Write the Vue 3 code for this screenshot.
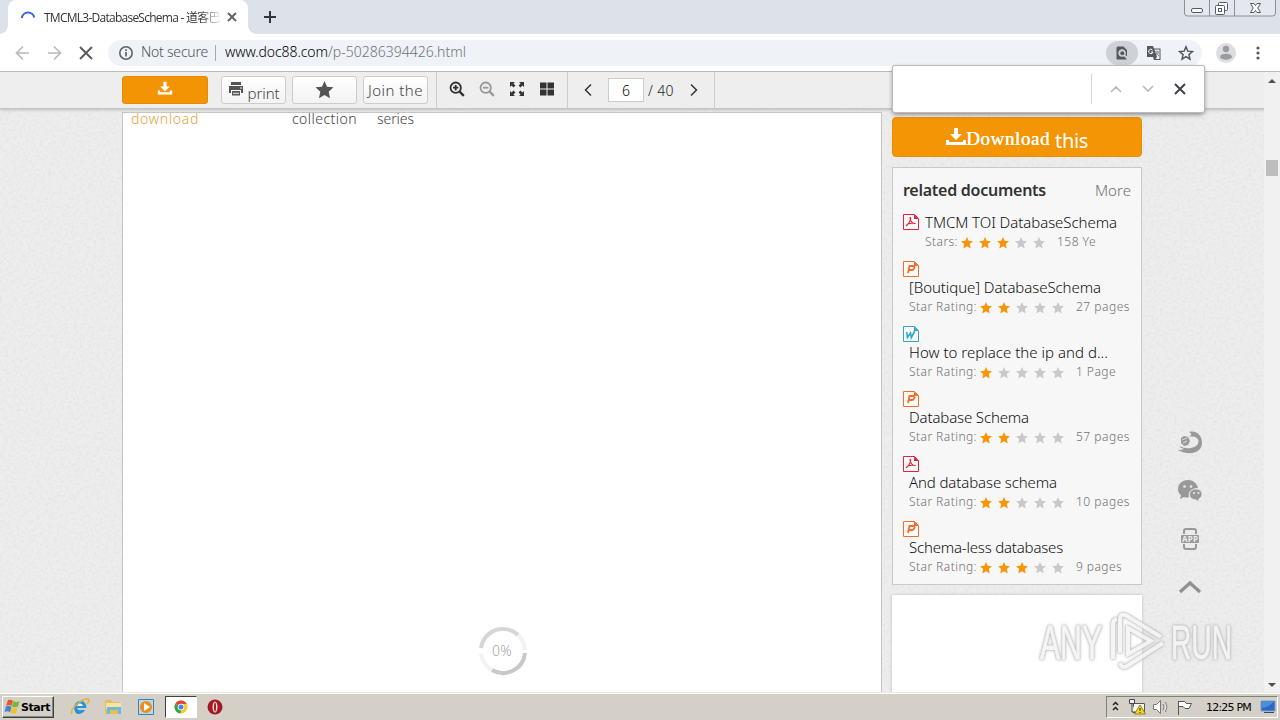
<script setup>
const vFit = {
  mounted(el, binding) {
    const width = el.getBoundingClientRect().width
    el.style.letterSpacing = (binding.value - width) / el.textContent.length + 'px'
  },
}
const starPath = 'M6 0 7.700 3.800l4.300.4-3.200 2.900.9 4.400L6 9.300l-3.700 2.200.9-4.400L0 4.200l4.300-.4z'
const docs = [
  { type: 'pdf', title: 'TMCM TOI DatabaseSchema', w: 192, label: 'Stars:', lw: 33, stars: 3, pages: '158 Ye', pw: 39, inline: true },
  { type: 'P', title: '[Boutique] DatabaseSchema', w: 192, label: 'Star Rating:', lw: 68, stars: 2, pages: '27 pages', pw: 54 },
  { type: 'W', title: 'How to replace the ip and d...', w: 199, label: 'Star Rating:', lw: 68, stars: 1, pages: '1 Page', pw: 40 },
  { type: 'P', title: 'Database Schema', w: 120, label: 'Star Rating:', lw: 68, stars: 2, pages: '57 pages', pw: 54 },
  { type: 'pdf', title: 'And database schema', w: 148, label: 'Star Rating:', lw: 68, stars: 2, pages: '10 pages', pw: 54 },
  { type: 'P', title: 'Schema-less databases', w: 154, label: 'Star Rating:', lw: 68, stars: 3, pages: '9 pages', pw: 46 },
]
const colors = { pdf: '#dc2440', P: '#ee6f2d', W: '#2ba9c9' }
</script>

<template>
  <div class="screen">
    <div class="tabs">
      <div class="tab">
        <svg class="spin" width="16" height="16" viewBox="0 0 16 16"><path d="M1.800 9A6.300 6.300 0 0 1 14.200 8.500" fill="none" stroke="#3367d6" stroke-width="2" /></svg>
        <span class="tabtitle"><span v-fit="187">TMCML3-DatabaseSchema - 道客巴巴</span></span>
        <svg width="10" height="10" viewBox="0 0 10 10"><path d="m1 1 8 8M9 1 1 9" stroke="#5f6368" stroke-width="1.900" /></svg>
      </div>
      <svg class="plus" width="12" height="12" viewBox="0 0 12 12"><path d="M6 0v12M0 6h12" stroke="#30343c" stroke-width="2" /></svg>
      <div class="winbtns">
        <svg width="92" height="17" viewBox="0 0 92 17">
          <path d="M.5 0v13q0 3 3 3h85q3 0 3-3V0M25.500 0v16M50.500 0v16" fill="#e4e8ee" stroke="#8a8f9a" />
          <rect x="7.500" y="8.500" width="11" height="4" rx="1.500" fill="#fff" stroke="#555b66" />
          <g fill="#fff" stroke="#555b66"><rect x="34.500" y="2.500" width="9" height="8" rx="1" /><rect x="31.500" y="5.500" width="9" height="9" rx="1" /><rect x="34.500" y="8.500" width="3" height="3" /></g>
          <path d="M66.500 3.500h3.500l1.500 2 1.500-2h3.500L73.800 8l2.700 4.500H73l-1.500-2-1.500 2h-3.500L69.200 8z" fill="#fff" stroke="#555b66" />
        </svg>
      </div>
    </div>

    <div class="nav">
      <svg class="navicons" width="80" height="16" viewBox="0 0 80 16" fill="none" stroke-width="1.700">
        <path d="M15 8H3M9 1.500 2.500 8 9 14.500M34 8h12M40 1.500 46.500 8 40 14.500" stroke="#b9bbbe" /><path d="m66 2 12 12M78 2 66 14" stroke="#55595e" stroke-width="1.900" />
      </svg>
      <div class="omni">
        <svg width="16" height="16" viewBox="0 0 16 16"><circle cx="8" cy="8" r="6.200" fill="none" stroke="#5f6368" stroke-width="1.600" /><path d="M8 7v4.500M8 4.300V6" stroke="#5f6368" stroke-width="1.700" /></svg>
        <span class="secure"><span v-fit="67">Not secure</span></span>
        <span class="url"><span v-fit="103">www.doc88.com</span><span v-fit="138" class="path">/p-50286394426.html</span></span>
        <span class="findpill"><svg width="16" height="16" viewBox="0 0 16 16"><path d="M3.500 1.500h6l3.500 3.500v6.500l-1.600-1.600a3.800 3.800 0 1 0-1.400 1.400l2.700 2.700q-.4.500-1.200.5h-8Q2.500 14.500 2.500 13.500v-11z" fill="#55595e" /><circle cx="8.300" cy="8.300" r="2" fill="#55595e" /></svg></span>
        <svg class="trans" width="16" height="16" viewBox="0 0 16 16"><path d="M1 1h6l1 2.500h6.500V15H8l-1-3H1z" fill="#55595e" /><path d="M8.500 4.500h5v9.500H9.500l1.500-2z" fill="#eceff2" /><path d="M9 7h4M11 5.500V7M12.500 7q-.5 2.500-3 4M10 8l3 3" stroke="#777" fill="none" stroke-width=".8" /><path d="M6.500 5A2.200 2.200 0 1 0 7 7H5" fill="none" stroke="#fff" /></svg>
        <svg width="16" height="16" viewBox="0 0 16 16"><path d="m8 1.700 1.800 4.400 4.700.4-3.600 3.100 1.100 4.600L8 11.700l-4 2.500 1.100-4.600-3.600-3.100 4.700-.4z" fill="none" stroke="#50545a" stroke-width="1.400" /></svg>
      </div>
      <svg class="avatar" width="20" height="20" viewBox="0 0 20 20"><circle cx="10" cy="10" r="10" fill="#dcdedf" /><circle cx="10" cy="6" r="3.200" fill="#9a9ca0" /><ellipse cx="10" cy="13.700" rx="6" ry="3" fill="#9a9ca0" /></svg>
      <svg class="dots" width="4" height="14" viewBox="0 0 4 14" fill="#55595e"><circle cx="2" cy="2" r="1.600" /><circle cx="2" cy="7" r="1.600" /><circle cx="2" cy="12" r="1.600" /></svg>
    </div>

    <div class="page">
      <svg class="texture" width="1264" height="620"><filter id="grain"><feTurbulence type="fractalNoise" baseFrequency=".35" numOctaves="2" /><feColorMatrix values="0 0 0 0 .5  0 0 0 0 .5  0 0 0 0 .5  .4 0 0 0 -.17" /></filter><rect width="1264" height="620" filter="url(#grain)" /></svg>
      <div class="bar">
        <div class="btn orange"><svg width="16" height="16" viewBox="0 0 20 20"><path d="M8 1h4v6h4l-6 6-6-6h4zM1 12v5h18v-5h-3v2H4v-2z" fill="#fff" /></svg></div>
        <div class="btn b1"><svg width="16" height="16" viewBox="0 0 16 16"><path d="M3 1h10v3H3zM1 5h14v7h-2V9H3v3H1zM4 10h8v4.500H4z" fill="#555" /><path d="M5 12.300h6M12 7h2" stroke="#eee" /></svg><span v-fit="32">print</span></div>
        <div class="btn"><svg class="bigstar" width="19" height="18" viewBox="0 0 12 12"><path :d="starPath" fill="#555" /></svg></div>
        <div class="btn"><span v-fit="55">Join the</span></div>
        <div class="group zooms">
          <svg v-for="z in 2" :key="z" width="16" height="16" viewBox="0 0 16 16" fill="none" :stroke="z === 1 ? '#303030' : '#999'" stroke-width="1.800"><circle cx="6.700" cy="6.700" r="5.200" /><path d="m10.500 10.500 4.300 4.300" stroke-width="2.400" /><path :d="z === 1 ? 'M6.700 4v5.400M4 6.700h5.400' : 'M4 6.700h5.400'" /></svg>
          <svg width="16" height="16" viewBox="0 0 16 16" fill="#333"><path d="M1 1h5L4.400 2.600l2 2-1.800 1.800-2-2L1 6zM15 1h-5l1.600 1.600-2 2 1.800 1.800 2-2L15 6zM1 15h5l-1.600-1.600 2-2-1.800-1.800-2 2L1 10zM15 15h-5l1.600-1.600-2-2 1.800-1.800 2 2L15 10z" /></svg>
          <svg width="16" height="16" viewBox="0 0 16 16" fill="#333"><path d="M1 1.500h6.500v6H1zM8.500 1.500H15v6H8.500zM1 8.500h6.500v6H1zM8.500 8.500H15v6H8.500z" /></svg>
        </div>
        <div class="group pager">
          <svg width="8" height="14" viewBox="0 0 8 14"><path d="M7 1.500 1.500 7 7 12.500" fill="none" stroke="#333" stroke-width="1.500" /></svg>
          <span class="input">6</span><span class="total"><span v-fit="26">/ 40</span></span>
          <svg width="8" height="14" viewBox="0 0 8 14"><path d="M1 1.500 6.500 7 1 12.500" fill="none" stroke="#333" stroke-width="1.500" /></svg>
        </div>
      </div>

      <div class="columns">
        <div class="paper">
          <div class="overflowed"><span v-fit="68" class="dl">download</span><span v-fit="65" class="co">collection</span><span v-fit="37" class="se">series</span></div>
          <div class="loader"><svg width="50" height="50" viewBox="0 0 50 50" fill="none" stroke-width="4"><path d="M3 22A22 22 0 0 1 40 9" stroke="#d6d6d6" /><path d="M47 27A22 22 0 0 1 14 44" stroke="#c8c8c8" /><path d="M40 9a22 22 0 0 1 7 15M14 44A22 22 0 0 1 3 28" stroke="#f2f2f2" /></svg><span v-fit="20">0%</span></div>
        </div>
        <div class="side">
          <div class="bigdl"><svg width="20" height="20" viewBox="0 0 20 20"><path d="M8 1h4v6h4l-6 6-6-6h4zM0 13v5h20v-5h-3v2H3v-2z" fill="#fff" /></svg><span v-fit="84" class="serif">Download</span><span v-fit="33" class="this">this</span></div>
          <div class="related">
            <div class="head"><b v-fit="143">related documents</b><span v-fit="36">More</span></div>
            <div v-for="(d, i) in docs" :key="i" class="doc" :class="{ inline: d.inline }">
              <svg class="ficon" width="16" height="16" viewBox="0 0 16 16" fill="none" :stroke="colors[d.type]">
                <path d="M.5.5h11l4 4v11H.5z" fill="#fffaf6" /><path d="M11 .5 15.500 5H11z" :fill="colors[d.type]" stroke="none" />
                <path v-if="d.type === 'pdf'" d="M7 3.500c2 0 0 5-4 8.500 1-2 5-3.200 9.500-2.500-3 .5-5.500-3-5.500-6z" stroke-width="1.100" />
                <path v-else-if="d.type === 'P'" d="m5 12 1.500-7H10q2 0 1.400 2T9 9H5.800" stroke-width="1.800" />
                <path v-else d="m3.800 6 .6 5.500L7.500 7l.8 4.500L11.800 5" stroke-width="1.600" />
              </svg>
              <div class="info">
                <div class="title"><span v-fit="d.w">{{ d.title }}</span></div>
                <div class="rating"><span v-fit="d.lw">{{ d.label }}</span><span class="stars"><svg v-for="s in 5" :key="s" width="12" height="12" viewBox="0 0 12 12"><path :d="starPath" :fill="s <= d.stars ? '#f89406' : '#c9c9cb'" /></svg></span><span v-fit="d.pw">{{ d.pages }}</span></div>
              </div>
            </div>
          </div>
          <div class="ad"></div>
        </div>
        <div class="tools">
          <svg width="26" height="24" viewBox="0 0 26 24"><path d="M12 1C20-1 25 5 25 12 25 21 13 26 1 19q4 0 6-1-4-1-5-3 6 3 12 2c8-1 10-9 4-11-2-1-4 0-6-1 3-1 3-2 0-4z" fill="#999" /><path d="m4 7 3-2 4 1 2 4-2 4-4 1-3-3z" fill="#999" /><path d="m5 9 5-2M6 12l4-2" stroke="#ddd" /></svg>
          <svg width="26" height="24" viewBox="0 0 26 24" fill="#999"><path d="M11 1C5 1 1 5 1 10q0 4 3 6l-1 4 4-2q3 1 5 0-2-8 9-9C20 4 16 1 11 1z" /><path d="M19 10q-6 0-6.500 5t6.500 6l3 1.500-.3-2.200Q25 18 25 15.500 25 10 19 10z" stroke="#eee" stroke-width=".7" /><g fill="#eee"><circle cx="7.500" cy="7.500" r="1.300" /><circle cx="14" cy="7.500" r="1.300" /><circle cx="17" cy="14" r="1" /><circle cx="21.500" cy="14" r="1" /></g></svg>
          <svg width="26" height="24" viewBox="0 0 26 24"><path d="M7 7V4q0-2 2-2h8q2 0 2 2v3M7 17v3q0 2 2 2h8q2 0 2-2v-3" fill="none" stroke="#999" stroke-width="2" /><rect x="4" y="8" width="18" height="8" rx="1" fill="#999" /><text x="5" y="15" font-size="8" font-weight="bold" textLength="16" fill="#eee">APP</text></svg>
          <svg width="26" height="24" viewBox="0 0 26 24"><path d="M3 17 13 8l10 9" fill="none" stroke="#909090" stroke-width="3.300" /></svg>
        </div>
      </div>
      <div class="scroll"><i class="up"></i><i class="thumb"></i><i class="down"></i></div>
      <svg class="mark" width="200" height="66" viewBox="0 0 200 66">
        <g class="marktext"><text x="3" y="51" textLength="62" lengthAdjust="spacingAndGlyphs">ANY</text><text x="134" y="51" textLength="61" lengthAdjust="spacingAndGlyphs">RUN</text></g>
        <path class="tri" d="M76 51V16q0-4 4-5M83 45V12q0-8 7-4l34 21M91 20v26l23-13zM126 35 90 58q-5 3-7-3" />
      </svg>
    </div>

    <div class="find">
      <svg width="311" height="46" viewBox="0 0 311 46" fill="none"><path d="M198.500 8v30" stroke="#d5d7da" /><path d="m218 26 5-5 5 5M250 20l5 5 5-5" stroke="#b6b8bb" stroke-width="1.600" /><path d="m282 18 10 10M292 18 282 28" stroke="#3f4348" stroke-width="2" /></svg>
    </div>

    <div class="taskbar">
      <div class="start"><svg width="17" height="16" viewBox="0 0 17 16"><path d="M4 1q3-1 5 1L7.500 7Q5 5 2 7z" fill="#ee5524" /><path d="M9.500 2q3 2 6 0L14 7.500q-3 1.500-6 0z" fill="#71b83b" /><path d="M2 7.500q3-1.500 5.500.5L6 13.500Q4 11.500.5 13z" fill="#3e86d4" /><path d="M8 8.500q3 1.500 5.500 0L12 14q-3 1.500-5.500 0z" fill="#f5bf25" /></svg><b v-fit="29">Start</b></div>
      <svg class="app" width="20" height="20" viewBox="0 0 20 20"><path d="M15.500 7Q13 2 8 4.500T4.500 13t7.500 3q2-1 3-3H11q-3 1-4-2h9.500q0-2-1-4z" fill="#2492dc" /><path d="M7 9q1-3 3.500-2.500T13 9z" fill="#eaf6fc" /><path d="M2 17C-1 12 13 1 18 2q2 1-1 5" fill="none" stroke="#e5b22e" stroke-width="1.500" /></svg>
      <svg class="app" width="20" height="20" viewBox="0 0 20 20"><path d="M2 3h6l1 2h8v12H2z" fill="#e7bd55" /><path d="M3 6h15v6H3z" fill="#f8e49c" /><path d="M4 10h14v7h-3v-4H7v4H4z" fill="#6cbbdf" /></svg>
      <svg class="app" width="20" height="20" viewBox="0 0 20 20"><path d="M2.500 2.500h15v15h-15z" fill="#b7daf0" stroke="#3a82bb" /><circle cx="10" cy="10" r="6" fill="#f38b16" /><path d="m8 6 6 4-6 4z" fill="#fff" /></svg>
      <div class="active"><svg width="16" height="16" viewBox="0 0 16 16"><circle cx="8" cy="8" r="6.500" fill="#f8c927" /><path d="M8 8 2.400 4.700A6.500 6.500 0 0 1 13.700 5H8z" fill="#e44335" /><path d="M8 8 2.400 4.700A6.500 6.500 0 0 0 7.500 14.500z" fill="#32a350" /><circle cx="8" cy="8" r="3.300" fill="#fff" /><circle cx="8" cy="8" r="2.500" fill="#4285e8" /></svg></div>
      <svg class="opera" width="16" height="16" viewBox="0 0 16 16"><circle cx="8" cy="8" r="7.500" fill="#a71920" /><ellipse cx="8" cy="8" rx="2.500" ry="5.500" fill="#e8e0dc" /><ellipse cx="8" cy="8" rx="1" ry="4.500" fill="#a71920" /></svg>
      <div class="tray">
        <svg width="92" height="20" viewBox="0 0 92 20">
          <path d="m6 8 2.500-2.500L11 8M6 13l2.500-2.500L11 13" fill="none" stroke="#222" stroke-width="1.500" />
          <path d="M26.500 6.500h11v9h-11z" fill="#f6f6f2" stroke="#555" /><path d="M22.500 2.500h5v4h-5zM25 7v8h4" fill="#eee" stroke="#444" /><path d="m33 8 5.500 9h-11z" fill="#f6d61b" stroke="#96801b" /><path d="M33 11v3M33 15v1" stroke="#222" />
          <path d="M46.500 7.500h3l4-4v13l-4-4h-3zM56 7q2 3 0 6M58.500 5q3 5 0 10" fill="#fff" stroke="#777" />
          <path d="M71.500 4v14M71.500 4.500h6l2 2h5l-2.500 5h-4l-2-2h-4.500" fill="#fff" stroke="#555" />
        </svg>
        <span v-fit="45" class="clock">12:25 PM</span>
        <svg class="desk" width="16" height="16" viewBox="0 0 16 16"><path d="M1 2h14v10H1z" fill="#286ac4" stroke="#819cbe" /><path d="M1.500 9Q9 8 14 2.500h-12z" fill="#4a91dc" /><path d="M4 13.500h10" stroke="#3c4a61" /></svg>
      </div>
    </div>
  </div>
</template>

<style>
body { margin: 0; overflow: hidden; }
</style>
<style scoped>
* { box-sizing: border-box; }
svg { display: block; flex: none; }
span, b { white-space: nowrap; }
.screen { position: relative; width: 1280px; height: 720px; overflow: hidden; display: flex; flex-direction: column; font-family: "Noto Sans", "Open Sans", "Noto Sans CJK SC", sans-serif; font-weight: 300; background: #fff; }
.tabs { height: 34px; background: #dde1e9; display: flex; align-items: center; padding-left: 8px; flex: none; }
.tab { width: 240px; height: 34px; background: #fff; border-radius: 8px 8px 0 0; display: flex; align-items: center; padding-left: 12px; position: relative; }
.tab::before, .tab::after { content: ""; position: absolute; bottom: 0; width: 8px; height: 8px; }
.tab::before { left: -8px; background: radial-gradient(circle at 0 0, #dde1e9 7.500px, #fff 8px); }
.tab::after { right: -8px; background: radial-gradient(circle at 100% 0, #dde1e9 7.500px, #fff 8px); }
.tabtitle { width: 176px; margin: 0 7px 0 8px; font: 12px "Open Sans", "Noto Sans CJK SC", sans-serif; color: #333; mask-image: linear-gradient(90deg, #000 155px, transparent 178px); overflow: hidden; }
.plus { margin-left: 16px; }
.winbtns { margin-left: auto; margin-right: 4px; align-self: flex-start; }
.nav { height: 38px; background: #fff; border-bottom: 1px solid #bbb; display: flex; align-items: center; padding-left: 14px; flex: none; }
.omni { width: 1094px; height: 26px; margin-left: 14px; border-radius: 13px; background: #eff2f6; display: flex; align-items: center; padding: 0 8px 0 10px; font-size: 14px; }
.secure { color: #505458; margin-left: 7px; width: 75px; height: 16px; display: flex; align-items: center; border-right: 1px solid #aaa; }
.url { margin-left: 9px; color: #000; display: flex; }
.path { color: #707478; }
.url, .secure span { margin-top: -2px; }
.findpill { margin-left: auto; width: 32px; height: 24px; border-radius: 12px; background: #ced1d5; display: flex; align-items: center; justify-content: center; }
.trans { margin: 0 16px 0 8px; }
.avatar { margin-left: 14px; }
.dots { margin-left: 20px; }
.page { height: 620px; position: relative; background: #ededed; overflow: hidden; flex: none; }
.texture { position: absolute; left: 0; top: 0; }
.bar { position: relative; height: 37px; background: #eee; border-bottom: 1px solid #c5c5c5; box-shadow: 0 1px 3px #bbb; display: flex; align-items: center; padding-left: 122px; }
.btn { width: 65px; height: 28px; margin-right: 6px; border: 1px solid #ccc; border-radius: 3px; background: linear-gradient(#fff, #f3f3f3); display: flex; align-items: center; justify-content: center; color: #444; font-size: 15px; }
.btn.orange { width: 86px; margin-right: 13px; background: #f39405; border-color: #e98b00; }
.b1 span { margin: 5px 0 0 4px; }
.b1 svg { margin-top: -2px; }
.orange svg { margin-top: -3px; }
.bigstar { margin-top: -1px; }
.group { height: 36px; border-left: 1px solid #ccc; display: flex; align-items: center; }
.zooms { margin-left: 2px; width: 131px; padding: 0 0 2px 12px; gap: 14px; }
.pager { width: 148px; padding-left: 16px; border-right: 1px solid #ccc; font-size: 14px; color: #222; }
.input { width: 36px; height: 24px; margin: 0 4px 0 16px; background: #fff; border: 1px solid #ccc; display: flex; align-items: center; justify-content: center; color: #000; }
.total { width: 42px; }
.columns { position: relative; display: flex; padding: 3px 0 0 122px; height: 583px; }
.paper { width: 760px; height: 584px; background: #fff; border: 1px solid #c5c5c5; position: relative; flex: none; }
.overflowed { height: 14px; display: flex; font-size: 14px; line-height: 12px; padding: 0 0 0 8px; color: #444; }
.dl { color: #e5a23a; margin-right: 93px; }
.co { margin-right: 20px; }
.loader { position: absolute; left: 355px; top: 513px; width: 50px; height: 50px; color: #a5a5a5; font-size: 14px; }
.loader svg { position: absolute; }
.loader span { position: absolute; left: 14px; top: 15px; }
.side { width: 250px; margin-left: 10px; padding-top: 5px; flex: none; }
.bigdl { height: 40px; border-radius: 4px; background: #f39505; border: 1px solid #e98f05; color: #fff; display: flex; align-items: center; justify-content: center; }
.bigdl svg { margin-top: 0; }
.serif { font: 500 19px "Liberation Serif", serif; text-shadow: .4px 0 #fff; margin-top: 3px; }
.this { font-size: 20px; margin: 6px 0 0 5px; font-weight: 400; }
.related { height: 418px; margin-top: 10px; border: 1px solid #c9c9c9; background: #f7f7f7; padding: 8px 10px; color: #111; }
.head { display: flex; justify-content: space-between; align-items: center; height: 28px; font-size: 15px; color: #707070; }
.head b { color: #333; font-size: 16px; font-weight: 600; }
.doc { height: 65px; padding-top: 2px; }
.doc.inline { height: 55px; display: flex; padding-top: 10px; }
.info { padding-left: 6px; }
.inline .info { margin-top: -2px; }
.title { height: 20px; line-height: 20px; font-size: 15px; }
.title span { display: inline-block; }
.rating { height: 18px; display: flex; align-items: center; font-size: 12px; color: #707070; }
.rating > span { flex: none; }
.stars { display: flex; gap: 6px; margin: 3px 12px 0 3px; }
.ad { height: 110px; margin-top: 10px; background: #fff; box-shadow: 0 0 3px #bbb; }
.tools { margin: 319px 0 0 35px; display: flex; flex-direction: column; gap: 24px; }
.scroll { position: absolute; right: 0; top: 0; width: 16px; height: 620px; background: #f1f1f1; }
.scroll i { position: absolute; left: 4px; border: 4px solid transparent; }
.scroll .up { top: 3px; border-bottom: 4px solid #505050; }
.scroll .down { bottom: 1px; border-top: 4px solid #505050; }
.scroll .thumb { left: 2px; top: 88px; width: 12px; height: 16px; background: #bdbdbd; border: 0; }
.mark { position: absolute; left: 1037px; top: 536px; opacity: .9; filter: drop-shadow(0 0 1px #aaa) drop-shadow(0 0 1.500px #ccc); }
.marktext { font: 48px "Liberation Sans", sans-serif; fill: #f4f4f4; stroke: #f4f4f4; stroke-width: .8; }
.tri { fill: none; stroke: #f4f4f4; stroke-width: 4; }
.find { position: absolute; left: 893px; top: 66px; width: 311px; height: 46px; background: #fff; border-radius: 2px; box-shadow: 0 0 0 1px #bbb, 0 2px 5px #777; }
.taskbar { height: 28px; background: #d4d0c8; border-top: 1px solid #eceae5; box-shadow: inset 0 1px #fff; display: flex; align-items: center; padding-left: 2px; flex: none; }
.start { width: 52px; height: 22px; margin-top: 1px; border: 1px solid; border-color: #fff #404040 #404040 #fff; box-shadow: inset -1px -1px #888; display: flex; align-items: center; font: 11px "DejaVu Sans", sans-serif; color: #000; padding-left: 1px; }
.app { margin-left: 13px; }
.start + .app { margin-left: 16px; }
.active { width: 32px; height: 22px; margin: 1px 11px 0 9px; background: #fff; border: 1px solid; border-color: #404040 #fff #fff #404040; display: flex; align-items: center; justify-content: center; }
.opera { margin-left: -1px; }
.tray { width: 172px; height: 22px; margin: 1px 2px 0 auto; border: 1px solid; border-color: #808080 #fff #fff #808080; display: flex; align-items: center; color: #000; }
.clock { font: 11px "DejaVu Sans", sans-serif; margin-left: 7px; }
.desk { margin-left: auto; margin-right: 1px; }
</style>
